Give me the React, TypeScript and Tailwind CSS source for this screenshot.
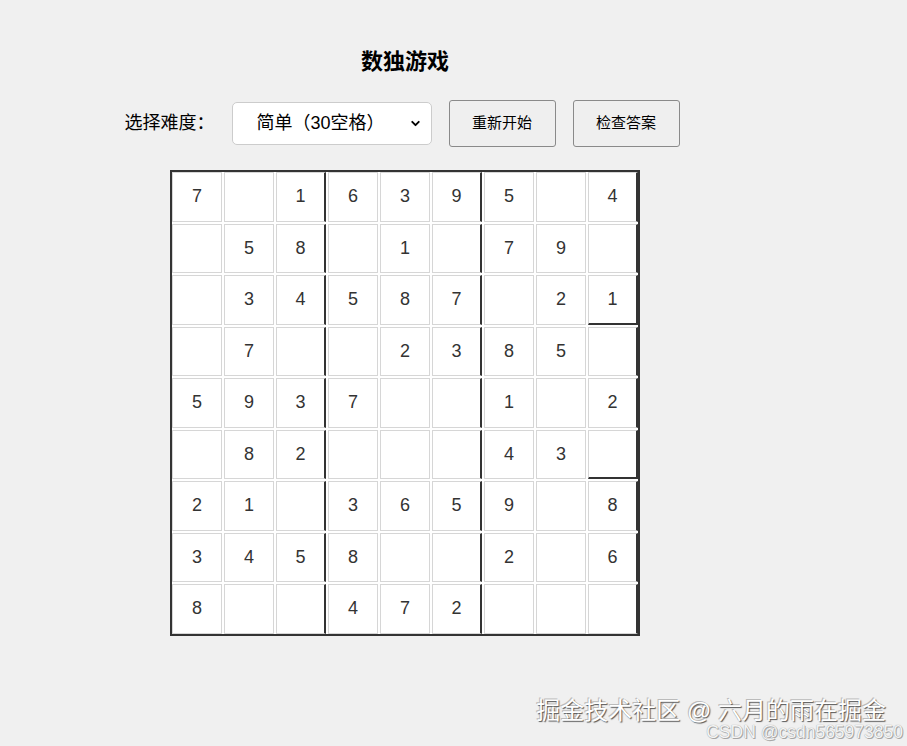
import { ChevronDown } from 'lucide-react';

const puzzle: (number | null)[][] = [
  [7, null, 1, 6, 3, 9, 5, null, 4],
  [null, 5, 8, null, 1, null, 7, 9, null],
  [null, 3, 4, 5, 8, 7, null, 2, 1],
  [null, 7, null, null, 2, 3, 8, 5, null],
  [5, 9, 3, 7, null, null, 1, null, 2],
  [null, 8, 2, null, null, null, 4, 3, null],
  [2, 1, null, 3, 6, 5, 9, null, 8],
  [3, 4, 5, 8, null, null, 2, null, 6],
  [8, null, null, 4, 7, 2, null, null, null],
];

const Cell = ({ value, row, col }: { value: number | null; row: number; col: number }) => {
  const thickRight = (col + 1) % 3 === 0;
  const thickBottom = col === 8 && (row === 2 || row === 5);
  return (
    <div
      className={
        'flex items-center justify-center bg-white text-[18px] text-[#333] border border-[#d6d6d6] ' +
        (thickRight ? 'border-r-2 border-r-[#333] ' : '') +
        (thickBottom ? 'border-b-2 border-b-[#333]' : '')
      }
    >
      {value ?? ''}
    </div>
  );
};

export default function App() {
  return (
    <div className="relative min-h-[746px] bg-[#f0f0f0] font-['Liberation_Sans','Noto_Sans_CJK_SC',sans-serif]">
      <div className="w-[810px] flex flex-col items-center">
        <h1 className="mt-[50px] text-[22px] leading-[24px] font-bold text-black">数独游戏</h1>

        <div className="mt-[26px] pr-[6px] flex items-center gap-[17px] text-black">
          <span className="text-[18px]">选择难度：</span>
          <div className="relative">
            <select className="appearance-none w-[200px] h-[43px] bg-white border border-[#ccc] rounded-[5px] pl-[24px] text-[18px] text-black outline-none">
              <option>简单（30空格）</option>
              <option>中等（40空格）</option>
              <option>困难（50空格）</option>
            </select>
            <ChevronDown className="pointer-events-none absolute right-[10px] top-[15px] h-[13px] w-[13px]" strokeWidth={3.5} />
          </div>
          <button className="w-[107px] h-[47px] bg-[#efefef] border border-[#8a8a8a] rounded-[3px] text-[15px]">
            重新开始
          </button>
          <button className="w-[107px] h-[47px] bg-[#efefef] border border-[#8a8a8a] rounded-[3px] text-[15px]">
            检查答案
          </button>
        </div>

        <div className="mt-[23px] grid grid-cols-[repeat(9,50px)] auto-rows-[49.5px] gap-[2px] bg-white border-2 border-[#333]">
          {puzzle.map((row, r) =>
            row.map((v, c) => <Cell key={`${r}-${c}`} value={v} row={r} col={c} />)
          )}
        </div>
      </div>

      <div className="absolute right-[21px] top-[696px] text-[24px] leading-[30px] text-white [text-shadow:1px_1px_1px_#555,-1px_-1px_0_#bbb]">
        掘金技术社区 @ 六月的雨在掘金
      </div>
      <div className="absolute right-[4px] top-[722px] text-[17.5px] leading-[20px] text-[#f4f4f4] [text-shadow:0_0_1px_#888,1px_1px_0_#aaa]">
        CSDN @csdn565973850
      </div>
    </div>
  );
}
